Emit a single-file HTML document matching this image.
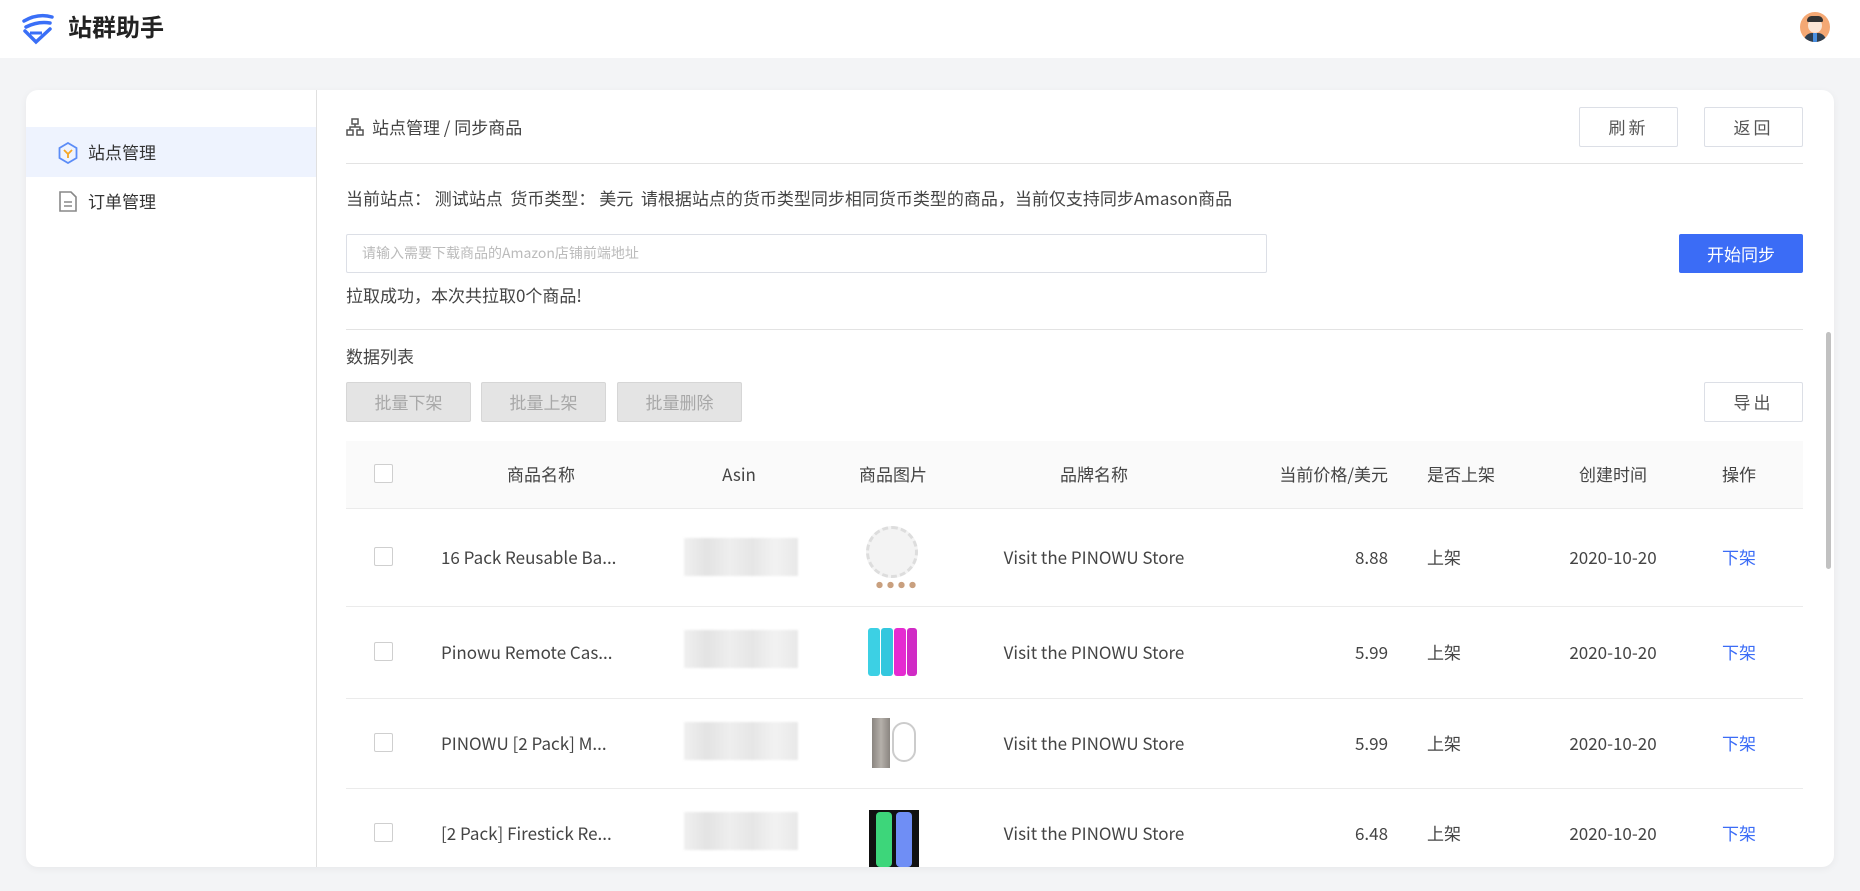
<!DOCTYPE html>
<html><head><meta charset="utf-8">
<style>
*{margin:0;padding:0;box-sizing:border-box}
body{width:1860px;height:891px;overflow:hidden;background:#f3f4f6;font-family:"Noto Sans CJK SC","Liberation Sans",sans-serif;color:#333;position:relative}
.a{position:absolute}
.hdr{left:0;top:0;width:1860px;height:58px;background:#fff}
.card{left:26px;top:90px;width:1808px;height:777px;background:#fff;border-radius:12px;box-shadow:0 2px 8px rgba(0,0,0,.05);overflow:hidden}
.btn{position:absolute;border:1px solid #dcdfe6;border-radius:2px;background:#fff;font-size:17px;color:#555;text-align:center;letter-spacing:3px}
.gbtn{position:absolute;background:#e4e4e4;border:1px solid #d6d6d6;border-radius:2px;color:#a8a8a8;font-size:17px;text-align:center}
.t{position:absolute;font-size:17px;line-height:22px;color:#444;white-space:nowrap}
.cb{position:absolute;width:19px;height:19px;border:1px solid #cfcfcf;border-radius:2px;background:#fff}
.line{position:absolute;height:1px;background:#ebebeb}
.blur{position:absolute;width:114px;height:38px;background:linear-gradient(90deg,#f0f0f0,#e3e3e3 20%,#eee 40%,#e6e6e6 60%,#f2f2f2 80%,#e8e8e8);filter:blur(1px)}
</style></head><body>
<div class="a hdr"></div>
<svg class="a" style="left:20px;top:13px" width="36" height="32" viewBox="0 0 36 32">
<path d="M4 8 Q18 0 32 4" fill="none" stroke="#3a6ff7" stroke-width="3.5" stroke-linecap="round"/>
<path d="M6 14 Q18 8 30 10" fill="none" stroke="#3a6ff7" stroke-width="3.5" stroke-linecap="round"/>
<path d="M5 18 L16 29 L30 16" fill="none" stroke="#3a6ff7" stroke-width="3.5" stroke-linecap="round"/>
<path d="M10 20 L22 20" stroke="#3a6ff7" stroke-width="3"/>
</svg>
<div class="a" style="left:68px;top:10px;font-size:24px;line-height:32px;font-weight:bold;color:#222">站群助手</div>
<div class="a" style="left:1800px;top:12px;width:30px;height:30px;border-radius:50%;background:#f4a874;overflow:hidden">
<div class="a" style="left:8px;top:6px;width:14px;height:15px;border-radius:50%;background:#fbe6d6"></div>
<div class="a" style="left:7px;top:4px;width:16px;height:6px;border-radius:6px 6px 2px 2px;background:#333"></div>
<div class="a" style="left:4px;top:21px;width:22px;height:12px;border-radius:8px 8px 0 0;background:#2d3e50"></div>
<div class="a" style="left:13px;top:21px;width:4px;height:9px;background:#4a90e2"></div>
</div>

<div class="a card">
<div class="a" style="left:290px;top:0;width:1px;height:777px;background:#e0e0e0"></div>
<div class="a" style="left:0;top:37px;width:290px;height:50px;background:#eef3fe"></div>
<svg class="a" style="left:32px;top:52px" width="20" height="22" viewBox="0 0 20 22"><path d="M10 1 L18.5 6 V16 L10 21 L1.5 16 V6 Z" fill="none" stroke="#5b8cf7" stroke-width="1.8"/><path d="M6 8 L10 12 L14 8 M10 12 V16" fill="none" stroke="#f5a623" stroke-width="1.8"/></svg>
<div class="t" style="left:62px;top:51px;color:#333">站点管理</div>
<svg class="a" style="left:33px;top:101px" width="18" height="21" viewBox="0 0 18 21"><path d="M1 1 H12 L17 6 V20 H1 Z" fill="none" stroke="#888" stroke-width="1.6"/><path d="M5 11 H13 M5 15 H13" stroke="#888" stroke-width="1.6"/></svg>
<div class="t" style="left:62px;top:100px;color:#333">订单管理</div>

<svg class="a" style="left:320px;top:28px" width="18" height="18" viewBox="0 0 18 18" fill="none" stroke="#555" stroke-width="1.5"><rect x="6" y="1" width="6" height="5"/><rect x="1" y="12" width="6" height="5"/><rect x="11" y="12" width="6" height="5"/><path d="M9 6 V9 M4 12 V9 H14 V12"/></svg>
<div class="t" style="left:346px;top:26px;color:#444">站点管理 / 同步商品</div>
<div class="btn" style="left:1553px;top:17px;width:99px;height:40px;line-height:38px">刷新</div>
<div class="btn" style="left:1678px;top:17px;width:99px;height:40px;line-height:38px">返回</div>
<div class="line" style="left:320px;top:73px;width:1457px;background:#e3e3e3"></div>
<div class="t" style="left:320px;top:97px">当前站点：&nbsp;测试站点&nbsp; 货币类型：&nbsp;美元&nbsp; 请根据站点的货币类型同步相同货币类型的商品，当前仅支持同步Amason商品</div>
<div class="a" style="left:320px;top:144px;width:921px;height:39px;border:1px solid #dcdfe6;border-radius:2px"></div>
<div class="a" style="left:336px;top:153px;font-size:14px;line-height:20px;color:#bbb">请输入需要下载商品的Amazon店铺前端地址</div>
<div class="a" style="left:1653px;top:144px;width:124px;height:39px;background:#3b6cf6;border-radius:2px;color:#fff;font-size:17px;text-align:center;line-height:39px">开始同步</div>
<div class="t" style="left:320px;top:194px">拉取成功，本次共拉取0个商品!</div>
<div class="line" style="left:320px;top:239px;width:1457px;background:#e3e3e3"></div>
<div class="t" style="left:320px;top:255px">数据列表</div>
<div class="gbtn" style="left:320px;top:292px;width:125px;height:40px;line-height:38px">批量下架</div>
<div class="gbtn" style="left:455px;top:292px;width:125px;height:40px;line-height:38px">批量上架</div>
<div class="gbtn" style="left:591px;top:292px;width:125px;height:40px;line-height:38px">批量删除</div>
<div class="btn" style="left:1678px;top:292px;width:99px;height:40px;line-height:38px">导出</div>

<div class="a" style="left:320px;top:351px;width:1457px;height:68px;background:#fafafa"></div>
<div class="line" style="left:320px;top:418px;width:1457px"></div>
<div class="cb" style="left:348px;top:374px"></div>
<div class="t" style="left:415px;top:373px;width:200px;text-align:center">商品名称</div>
<div class="t" style="left:653px;top:373px;width:120px;text-align:center">Asin</div>
<div class="t" style="left:807px;top:373px;width:120px;text-align:center">商品图片</div>
<div class="t" style="left:968px;top:373px;width:200px;text-align:center">品牌名称</div>
<div class="t" style="left:1212px;top:373px;width:150px;text-align:right">当前价格/美元</div>
<div class="t" style="left:1401px;top:373px">是否上架</div>
<div class="t" style="left:1537px;top:373px;width:100px;text-align:center">创建时间</div>
<div class="t" style="left:1663px;top:373px;width:100px;text-align:center">操作</div>

<div class="cb" style="left:348px;top:457px"></div>
<div class="t" style="left:415px;top:456px">16 Pack Reusable Ba...</div>
<div class="blur" style="left:658px;top:448px"></div>
<div class="a" style="left:840px;top:436px;width:52px;height:52px;border-radius:50%;background:#f3f3f3;border:3px dashed #ddd"></div>
<div class="a" style="left:848px;top:490px;width:44px;height:10px;background:radial-gradient(circle,#c9a07f 40%,transparent 45%) 0 0/11px 10px"></div>
<div class="t" style="left:968px;top:456px;width:200px;text-align:center">Visit the PINOWU Store</div>
<div class="t" style="left:1212px;top:456px;width:150px;text-align:right">8.88</div>
<div class="t" style="left:1401px;top:456px">上架</div>
<div class="t" style="left:1537px;top:456px;width:100px;text-align:center">2020-10-20</div>
<div class="t" style="left:1663px;top:456px;width:100px;text-align:center;color:#3b6cf6">下架</div>
<div class="line" style="left:320px;top:516px;width:1457px"></div>

<div class="cb" style="left:348px;top:552px"></div>
<div class="t" style="left:415px;top:551px">Pinowu Remote Cas...</div>
<div class="blur" style="left:658px;top:540px"></div>
<div class="a" style="left:842px;top:538px;width:12px;height:48px;background:#3cd0e4;border-radius:3px"></div>
<div class="a" style="left:855px;top:538px;width:12px;height:48px;background:#33c7de;border-radius:3px"></div>
<div class="a" style="left:868px;top:538px;width:12px;height:48px;background:#e52bd1;border-radius:3px"></div>
<div class="a" style="left:881px;top:538px;width:10px;height:48px;background:#d02bc5;border-radius:3px"></div>
<div class="t" style="left:968px;top:551px;width:200px;text-align:center">Visit the PINOWU Store</div>
<div class="t" style="left:1212px;top:551px;width:150px;text-align:right">5.99</div>
<div class="t" style="left:1401px;top:551px">上架</div>
<div class="t" style="left:1537px;top:551px;width:100px;text-align:center">2020-10-20</div>
<div class="t" style="left:1663px;top:551px;width:100px;text-align:center;color:#3b6cf6">下架</div>
<div class="line" style="left:320px;top:608px;width:1457px"></div>

<div class="cb" style="left:348px;top:643px"></div>
<div class="t" style="left:415px;top:642px">PINOWU [2 Pack] M...</div>
<div class="blur" style="left:658px;top:632px"></div>
<div class="a" style="left:846px;top:628px;width:18px;height:50px;background:linear-gradient(90deg,#8a8580,#b5b0aa,#8a8580)"></div>
<div class="a" style="left:866px;top:632px;width:24px;height:40px;border:2px solid #ccc;border-radius:12px"></div>
<div class="t" style="left:968px;top:642px;width:200px;text-align:center">Visit the PINOWU Store</div>
<div class="t" style="left:1212px;top:642px;width:150px;text-align:right">5.99</div>
<div class="t" style="left:1401px;top:642px">上架</div>
<div class="t" style="left:1537px;top:642px;width:100px;text-align:center">2020-10-20</div>
<div class="t" style="left:1663px;top:642px;width:100px;text-align:center;color:#3b6cf6">下架</div>
<div class="line" style="left:320px;top:698px;width:1457px"></div>

<div class="cb" style="left:348px;top:733px"></div>
<div class="t" style="left:415px;top:732px">[2 Pack] Firestick Re...</div>
<div class="blur" style="left:658px;top:722px"></div>
<div class="a" style="left:843px;top:720px;width:50px;height:57px;background:#111"></div>
<div class="a" style="left:850px;top:722px;width:16px;height:55px;background:#3dd67a;border-radius:4px"></div>
<div class="a" style="left:870px;top:722px;width:16px;height:55px;background:#6f8ef5;border-radius:4px"></div>
<div class="t" style="left:968px;top:732px;width:200px;text-align:center">Visit the PINOWU Store</div>
<div class="t" style="left:1212px;top:732px;width:150px;text-align:right">6.48</div>
<div class="t" style="left:1401px;top:732px">上架</div>
<div class="t" style="left:1537px;top:732px;width:100px;text-align:center">2020-10-20</div>
<div class="t" style="left:1663px;top:732px;width:100px;text-align:center;color:#3b6cf6">下架</div>

<div class="a" style="left:1800px;top:242px;width:5px;height:237px;background:#c1c1c1;border-radius:3px"></div>
</div>
</body></html>
